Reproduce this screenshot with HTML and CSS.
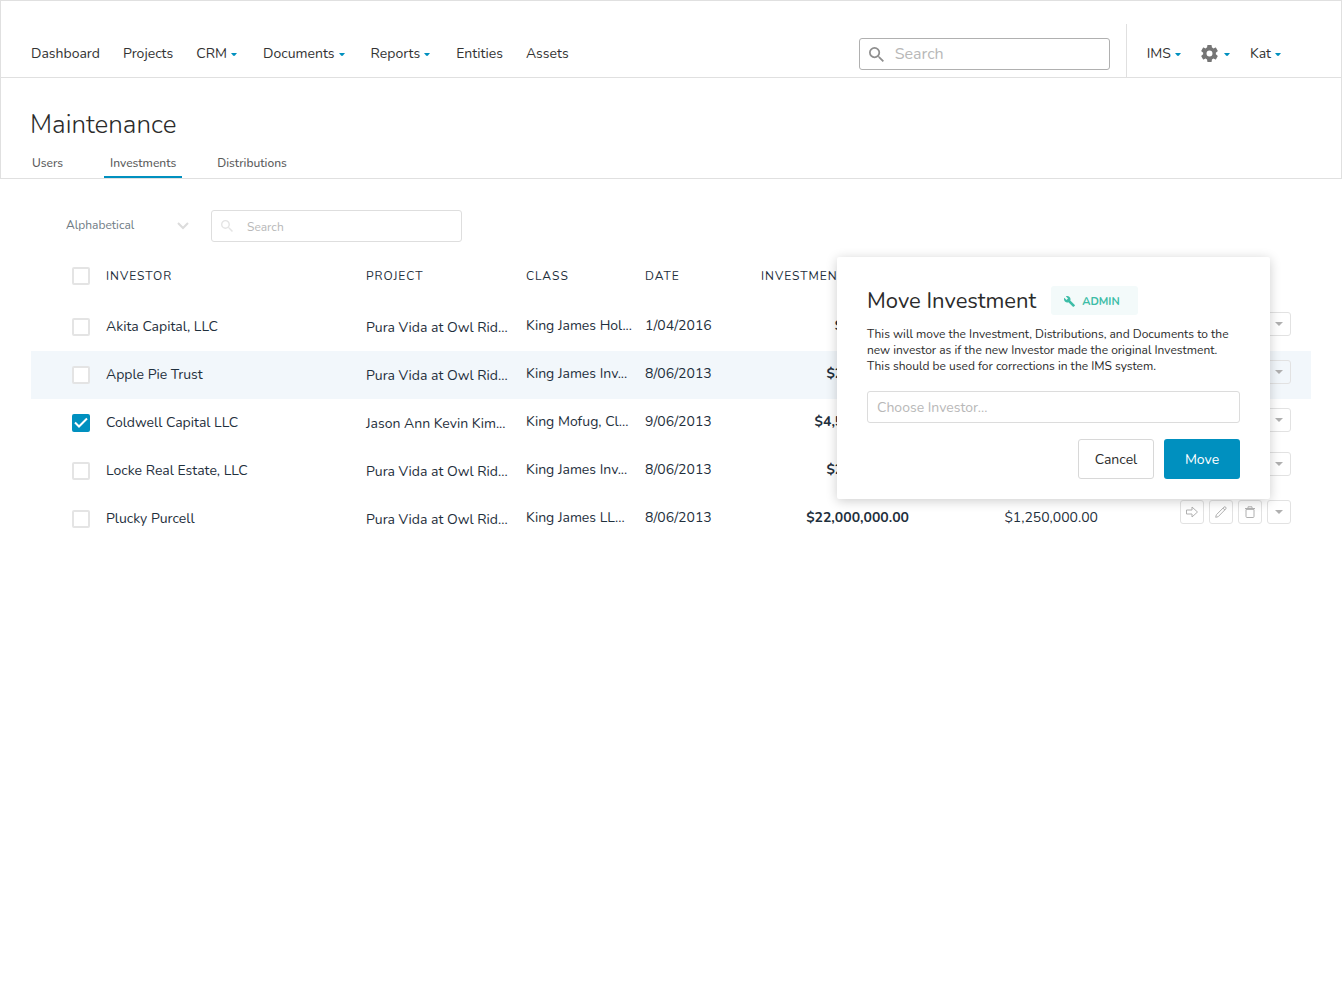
FILE: index.html
```html
<!DOCTYPE html>
<html lang="en">
<head>
<meta charset="utf-8">
<title>Maintenance</title>
<link rel="stylesheet" href="styles.css">
</head>
<body>
<svg class="sprite" aria-hidden="true">
  <symbol id="caret" viewBox="0 0 6 3"><path d="M0 0h6L4 2.600Q3 3.400 2 2.600z"/></symbol>
  <symbol id="down" viewBox="0 0 8 4"><path d="M0 0h8L4 4z"/></symbol>
  <symbol id="search" viewBox="3 3 17.500 17.500"><path d="M15.500 14h-.79l-.28-.27A6.470 6.470 0 0 0 16 9.500 6.500 6.500 0 1 0 9.500 16c1.610 0 3.090-.59 4.230-1.570l.27.28v.79l5 4.990L20.490 19l-4.990-5zm-6 0C7.010 14 5 11.990 5 9.500S7.010 5 9.500 5 14 7.010 14 9.500 11.990 14 9.500 14z"/></symbol>
  <symbol id="gear" viewBox="2 2 20 20"><path d="M19.430 12.980c.04-.32.07-.64.07-.98s-.03-.66-.07-.98l2.110-1.650c.19-.15.24-.42.12-.64l-2-3.460c-.12-.22-.39-.3-.61-.22l-2.490 1c-.52-.4-1.080-.73-1.690-.98l-.38-2.650A.488.488 0 0 0 14 2h-4c-.25 0-.46.18-.49.42l-.38 2.650c-.61.25-1.170.59-1.690.98l-2.490-1c-.23-.09-.49 0-.61.22l-2 3.460c-.13.22-.07.49.12.64l2.110 1.650c-.04.32-.07.65-.07.98s.03.66.07.98l-2.110 1.650c-.19.15-.24.42-.12.64l2 3.460c.12.22.39.3.61.22l2.490-1c.52.4 1.080.73 1.690.98l.38 2.650c.03.24.24.42.49.42h4c.25 0 .46-.18.49-.42l.38-2.650c.61-.25 1.170-.59 1.690-.98l2.490 1c.23.09.49 0 .61-.22l2-3.460c.12-.22.07-.49-.12-.64l-2.110-1.650zM12 15.500a3.500 3.500 0 1 1 0-7 3.500 3.500 0 0 1 0 7z"/></symbol>
  <symbol id="wrench" viewBox="1 1 22 22"><path d="M22.700 19l-9.100-9.100c.9-2.300.4-5-1.500-6.900-2-2-5-2.400-7.400-1.300L9 6 6 9 1.600 4.700C.4 7.100.9 10.100 2.900 12.100c1.900 1.900 4.600 2.400 6.900 1.500l9.100 9.100c.4.4 1 .4 1.400 0l2.300-2.300c.5-.4.5-1.100.1-1.400z"/></symbol>
  <symbol id="move" viewBox="0 0 12 12"><path d="M.5 4h5.500V1L11.500 6 6 11V8H.5z"/></symbol>
  <symbol id="edit" viewBox="0 0 12 12"><path d="M.7 11.300l.6-2.500L9 1.100q.9-.7 1.700.1t.1 1.700L3.200 10.700zM8 2.100l1.900 1.900"/></symbol>
  <symbol id="trash" viewBox="0 0 12 12"><path d="M2 3.500v7q0 1 1 1h6q1 0 1-1v-7M1 2.500h10M4 2V.8h4V2M2 3.400h8"/></symbol>
</svg>

<header class="topbar">
  <nav class="nav" aria-label="Main">
    <a href="#">Dashboard</a>
    <a href="#">Projects</a>
    <a href="#">CRM<svg class="caret"><use href="#caret"/></svg></a>
    <a href="#">Documents<svg class="caret"><use href="#caret"/></svg></a>
    <a href="#">Reports<svg class="caret"><use href="#caret"/></svg></a>
    <a href="#">Entities</a>
    <a href="#">Assets</a>
  </nav>
  <label class="search search-main">
    <svg><use href="#search"/></svg>
    <input type="search" placeholder="Search" aria-label="Search">
  </label>
  <div class="account">
    <button type="button">IMS<svg class="caret"><use href="#caret"/></svg></button>
    <button type="button" aria-label="Settings"><svg class="gear"><use href="#gear"/></svg><svg class="caret"><use href="#caret"/></svg></button>
    <button type="button">Kat<svg class="caret"><use href="#caret"/></svg></button>
  </div>
</header>

<section class="heading">
  <h1>Maintenance</h1>
  <nav class="tabs" aria-label="Maintenance sections">
    <a href="#">Users</a>
    <a href="#" class="active" aria-current="page">Investments</a>
    <a href="#">Distributions</a>
  </nav>
</section>

<main class="content">
  <div class="filters">
    <select class="sort" aria-label="Sort order"><option>Alphabetical</option></select>
    <label class="search search-list">
      <svg><use href="#search"/></svg>
      <input type="search" placeholder="Search" aria-label="Search investments">
    </label>
  </div>

  <table class="investments">
    <colgroup>
      <col class="col-check"><col><col class="col-project"><col class="col-class"><col class="col-date"><col class="col-amount"><col class="col-paid"><col class="col-actions">
    </colgroup>
    <thead>
      <tr>
        <th class="check"><input type="checkbox" aria-label="Select all"></th>
        <th>INVESTOR</th><th>PROJECT</th><th>CLASS</th><th>DATE</th>
        <th class="amount">INVESTMENT AMOUNT</th><th></th><th></th>
      </tr>
    </thead>
    <tbody>
      <tr>
        <td class="check"><input type="checkbox" aria-label="Akita Capital, LLC"></td>
        <td class="name">Akita Capital, LLC</td><td class="project">Pura Vida at Owl Rid...</td><td>King James Hol...</td><td>1/04/2016</td>
        <td class="amount">$50,000.00</td><td class="paid"></td>
        <td class="actions"><button type="button" aria-label="More"><svg class="down"><use href="#down"/></svg></button></td>
      </tr>
      <tr class="hover">
        <td class="check"><input type="checkbox" aria-label="Apple Pie Trust"></td>
        <td class="name">Apple Pie Trust</td><td class="project">Pura Vida at Owl Rid...</td><td>King James Inv...</td><td>8/06/2013</td>
        <td class="amount">$250,000.00</td><td class="paid"></td>
        <td class="actions"><button type="button" aria-label="More"><svg class="down"><use href="#down"/></svg></button></td>
      </tr>
      <tr>
        <td class="check"><input type="checkbox" aria-label="Coldwell Capital LLC" checked></td>
        <td class="name">Coldwell Capital LLC</td><td class="project">Jason Ann Kevin Kim...</td><td>King Mofug, Cl...</td><td>9/06/2013</td>
        <td class="amount">$4,500,000.00</td><td class="paid"></td>
        <td class="actions"><button type="button" aria-label="More"><svg class="down"><use href="#down"/></svg></button></td>
      </tr>
      <tr>
        <td class="check"><input type="checkbox" aria-label="Locke Real Estate, LLC"></td>
        <td class="name">Locke Real Estate, LLC</td><td class="project">Pura Vida at Owl Rid...</td><td>King James Inv...</td><td>8/06/2013</td>
        <td class="amount">$250,000.00</td><td class="paid"></td>
        <td class="actions"><button type="button" aria-label="More"><svg class="down"><use href="#down"/></svg></button></td>
      </tr>
      <tr>
        <td class="check"><input type="checkbox" aria-label="Plucky Purcell"></td>
        <td class="name">Plucky Purcell</td><td class="project">Pura Vida at Owl Rid...</td><td>King James LL...</td><td>8/06/2013</td>
        <td class="amount">$22,000,000.00</td><td class="paid">$1,250,000.00</td>
        <td class="actions"><button type="button" aria-label="Move"><svg class="line"><use href="#move"/></svg></button><button type="button" aria-label="Edit"><svg class="line"><use href="#edit"/></svg></button><button type="button" aria-label="Delete"><svg class="line"><use href="#trash"/></svg></button><button type="button" aria-label="More"><svg class="down"><use href="#down"/></svg></button></td>
      </tr>
    </tbody>
  </table>
</main>

<section class="modal" role="dialog" aria-labelledby="modal-title">
  <div class="modal-head">
    <h2 id="modal-title">Move Investment</h2>
    <span class="badge"><svg><use href="#wrench"/></svg>ADMIN</span>
  </div>
  <p>This will move the Investment, Distributions, and Documents to the<br>new investor as if the new Investor made the original Investment.<br>This should be used for corrections in the IMS system.</p>
  <input class="investor" type="text" placeholder="Choose Investor..." aria-label="Choose investor">
  <div class="modal-actions">
    <button type="button" class="cancel">Cancel</button>
    <button type="button" class="primary">Move</button>
  </div>
</section>
</body>
</html>
```
FILE: styles.css
```css
* { box-sizing: border-box; }

body {
  margin: 0;
  position: relative;
  background: #fff;
  color: #1f303d;
  font: 14px/20px Nunito, Lato, sans-serif;
}

button, input, select { font: inherit; color: inherit; }
button { background: none; border: 0; padding: 0; }
a { color: inherit; text-decoration: none; }
h1, h2, p { margin: 0; font-weight: 400; }
svg { display: block; flex: none; fill: currentColor; }
.sprite { display: none; }

.topbar {
  display: flex;
  align-items: flex-end;
  height: 78px;
  padding: 0 57px 0 30px;
  border: 1px solid #e0e0e0;
  color: #333;
}
.nav {
  display: flex;
  flex: 1;
  gap: 23px;
  padding-bottom: 13px;
}
.nav a, .account button { display: flex; align-items: center; }
.caret { width: 6px; height: 3px; margin: 1px 3px 0 4px; color: #0090bf; }

.search {
  display: flex;
  align-items: center;
  width: 251px;
  height: 32px;
  border: 1px solid #dedede;
  border-radius: 3px;
}
.search input {
  flex: 1;
  min-width: 0;
  padding: 0;
  border: 0;
  outline: 0;
  background: none;
}
input::placeholder { color: #b8b8b8; opacity: 1; }
.search-main {
  margin: 0 16px 7px 0;
  padding: 0 9px;
  gap: 11px;
  border-color: #b0b0b0;
  font-size: 16px;
}
.search-main svg { width: 15px; height: 15px; color: #8e8e8e; }
.search-list { padding: 0 9px; gap: 14px; font-size: 12px; }
.search-list input { padding-top: 2px; }
.search-list svg { width: 12px; height: 12px; color: #e4e4e4; }

.account {
  display: flex;
  gap: 17px;
  height: 53px;
  padding: 6px 0 0 20px;
  border-left: 1px solid #e0e0e0;
}
.gear { width: 17px; height: 17px; margin-right: 2px; color: #757575; }

.heading {
  height: 101px;
  padding: 29px 29px 0;
  border: 1px solid #e0e0e0;
  border-top: 0;
  color: #2b2b2b;
}
.heading h1 { font-size: 26px; line-height: 36px; font-weight: 300; }
.tabs {
  display: flex;
  gap: 29px;
  padding-top: 8px;
  color: #5b5b5b;
  font-size: 12px;
  font-weight: 500;
}
.tabs a { height: 27px; padding: 2px 6px 0; }
.tabs a:first-child { padding: 2px 12px 0 2px; }
.tabs .active { border-bottom: 2px solid #0090bf; }

.content { padding: 31px 31px 0; }
.filters { display: flex; padding-left: 35px; gap: 21px; }
.sort {
  appearance: none;
  width: 124px;
  height: 30px;
  padding: 0;
  border: 0;
  color: #6f7b84;
  font-size: 12px;
  background: url("data:image/svg+xml,%3Csvg xmlns='http://www.w3.org/2000/svg' width='12' height='8' fill='none' stroke='%23dcdcdc' stroke-width='2'%3E%3Cpath d='M1 1l5 5 5-5'/%3E%3C/svg%3E") no-repeat right 1px top 12px;
}

.investments {
  width: 100%;
  margin-top: 7px;
  border-collapse: collapse;
  table-layout: fixed;
}
.col-check { width: 75px; }
.col-project { width: 160px; }
.col-class { width: 119px; }
.col-date { width: 86px; }
.col-amount { width: 178px; }
.col-paid { width: 189px; }
.col-actions { width: 213px; }
.investments th {
  height: 54px;
  padding: 0;
  text-align: left;
  font-size: 12px;
  font-weight: 400;
  letter-spacing: 1px;
}
.investments td { height: 48px; padding: 0 0 3px; white-space: nowrap; }
.investments .name { padding: 0 0 1px; }
.investments .project { padding: 1px 0 0; }
.investments th.check { padding: 0 0 0 41px; }
.investments td.check { padding: 0 0 1px 41px; }
.investments .amount, .investments .paid { text-align: right; }
.investments td.amount { font-weight: 700; }
.hover { background: #f2f7fb; }

input[type="checkbox"] {
  appearance: none;
  display: block;
  width: 18px;
  height: 18px;
  margin: 0;
  border: 2px solid #e4e4e4;
  border-radius: 2px;
  background: #fff;
}
input[type="checkbox"]:checked {
  border-color: #0090bf;
  background: #0090bf url("data:image/svg+xml,%3Csvg xmlns='http://www.w3.org/2000/svg' width='14' height='14' fill='none' stroke='white' stroke-width='2'%3E%3Cpath d='M1 6.500l4 4 8-8'/%3E%3C/svg%3E") no-repeat center;
}

.investments .actions {
  padding: 9px 20px 0 0;
  vertical-align: top;
  text-align: right;
  line-height: 0;
}
.investments tr:nth-child(n+4) .actions { padding-top: 5px; }
.actions button {
  display: inline-flex;
  align-items: center;
  justify-content: center;
  vertical-align: top;
  width: 24px;
  height: 24px;
  margin-left: 5px;
  border: 1px solid #e2e2e2;
  border-radius: 3px;
  color: #b0b0b0;
}
.down { width: 8px; height: 4px; }
.line { width: 12px; height: 12px; fill: none; stroke: currentColor; stroke-width: 1; }

.modal {
  position: absolute;
  top: 257px;
  right: 72px;
  width: 433px;
  padding: 29px 30px 20px;
  border-radius: 2px;
  background: #fff;
  color: #2b2b2b;
  box-shadow: 0 2px 12px rgba(0, 0, 0, .2);
}
.modal-head { display: flex; align-items: center; gap: 15px; }
.modal h2 { font-size: 22px; line-height: 28px; padding-top: 1px; }
.badge {
  display: flex;
  align-items: center;
  gap: 7px;
  height: 29px;
  padding: 2px 18px 0 13px;
  border-radius: 3px;
  background: #f3fafa;
  color: #3dbda7;
  font-size: 11px;
  font-weight: 700;
}
.badge svg { width: 11px; height: 11px; }
.modal p { margin-top: 11px; font-size: 12px; line-height: 16px; white-space: nowrap; }
.investor {
  display: block;
  width: 100%;
  height: 32px;
  margin-top: 17px;
  padding: 0 9px;
  border: 1px solid #dcdcdc;
  border-radius: 3px;
}
.modal-actions { display: flex; justify-content: flex-end; gap: 10px; margin-top: 16px; }
.modal-actions button { width: 76px; height: 40px; padding-top: 2px; border-radius: 3px; }
.cancel { border: 1px solid #d8d8d8; }
.modal-actions .primary { background: #0090bf; color: #fff; }
```
